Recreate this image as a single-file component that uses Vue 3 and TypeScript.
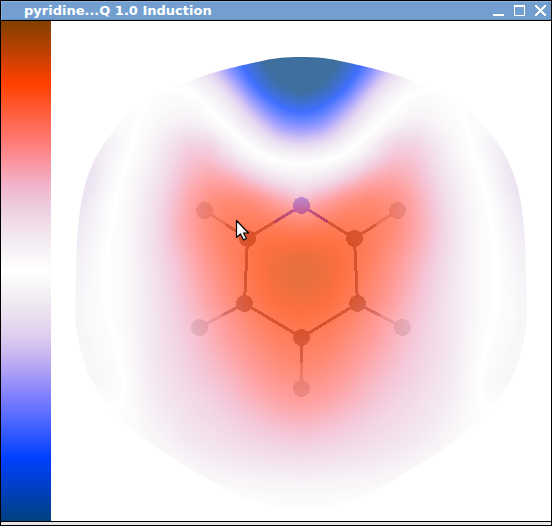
<script setup lang="ts">
import { onMounted, ref } from 'vue'

type Rgb = [number, number, number]
type Pair = [number, number]

interface Atom {
  id: string
  kind: 'n' | 'c' | 'h'
  x: number
  y: number
}

const SIZE = 500
const CENTER = 250

// Colour scale: level (percent) to colour, most positive first.
const scale: { level: number; rgb: Rgb }[] = [
  { level: 100, rgb: [128, 64, 0] },
  { level: 75, rgb: [255, 64, 0] },
  { level: 50, rgb: [255, 128, 128] },
  { level: 34, rgb: [242, 180, 204] },
  { level: 25, rgb: [238, 207, 224] },
  { level: 12, rgb: [243, 236, 242] },
  { level: 0, rgb: [255, 255, 255] },
  { level: -12, rgb: [240, 235, 242] },
  { level: -25, rgb: [224, 208, 238] },
  { level: -34, rgb: [200, 180, 240] },
  { level: -50, rgb: [128, 128, 255] },
  { level: -75, rgb: [0, 64, 255] },
  { level: -100, rgb: [0, 64, 128] },
]

const scaleStyle = {
  background: `linear-gradient(to bottom, ${scale
    .map((s) => `rgb(${s.rgb.join(',')}) ${(100 - s.level) / 2}%`)
    .join(', ')})`,
}

const upper = [0, 18, 31, 44, 58, 71, 91, 114, 131, 148]
const lower = [0, 24, 48, 70, 91, 108, 124, 141, 160]

const zip = (columns: number[], values: number[], extra: Pair[] = []): Pair[] => [
  ...values.map((v, i): Pair => [columns[i], v]),
  ...extra,
]

// Sampled potential: each row lists [distance from the axis, level].
const samples: { y: number; row: Pair[] }[] = [
  { y: 30, row: [[0, -110], [40, -108], [54, -88], [68, -70], [86, -46], [102, -20], [124, -4]] },
  { y: 49, row: [[0, -112], [28, -102], [41, -92], [58, -74], [68, -61], [78, -45], [88, -31], [98, -20], [110, -9], [130, -2]] },
  { y: 59, row: [[0, -110], [24, -101], [44, -82], [54, -70], [64, -55], [74, -39], [84, -26], [94, -18], [108, -8], [124, -2], [160, 0]] },
  { y: 69, row: [[0, -104], [12, -100], [31, -88], [41, -77], [51, -64], [61, -46], [71, -31], [84, -17], [98, -7], [114, 0], [160, 0]] },
  { y: 79, row: [[0, -91], [18, -84], [31, -73], [41, -63], [51, -49], [61, -33], [71, -20], [81, -11], [94, -2], [106, 3], [124, 5], [158, 0], [180, -3]] },
  { y: 89, row: zip(upper, [-78, -73, -62, -45, -27, -12, 0, 8, 6, 2], [[156, 0], [185, -4]]) },
  { y: 99, row: zip(upper, [-65, -60, -48, -32, -17, -7, 5, 12, 9, 4], [[161, 0], [181, -5]]) },
  { y: 109, row: zip(upper, [-50, -46, -35, -21, -10, 0, 15, 20, 14, 7], [[164, 1], [188, -7]]) },
  { y: 119, row: zip(upper, [-34, -29, -21, -11, -1, 9, 25, 27, 18, 9], [[166, 1], [191, -10]]) },
  { y: 129, row: zip(upper, [-18, -14, -9, -2, 6, 17, 32, 32, 22, 11], [[170, 0], [197, -14]]) },
  { y: 139, row: zip(upper, [-3, -1, 2, 7, 15, 26, 38, 35, 24, 12], [[172, 1], [191, -7], [206, -18]]) },
  { y: 149, row: zip(upper, [6, 8, 12, 20, 30, 38, 44, 38, 27, 15], [[176, 1], [194, -8], [208, -20]]) },
  { y: 159, row: zip(lower, [15, 21, 35, 47, 49, 43, 34, 22, 11], [[180, 1], [198, -10], [212, -22]]) },
  { y: 169, row: zip(lower, [26, 35, 49, 55, 54, 47, 37, 24, 12], [[182, 1], [198, -8], [214, -21]]) },
  { y: 179, row: zip(lower, [38, 49, 59, 62, 58, 50, 39, 26, 13], [[176, 4], [186, 0], [198, -5], [215, -18], [222, -22]]) },
  { y: 199, row: zip(lower, [61, 65, 68, 67, 61, 52, 41, 28, 14], [[176, 5], [190, 0], [205, -8], [222, -17]]) },
  { y: 219, row: zip(lower, [74, 74, 72, 67, 60, 50, 40, 28, 15], [[178, 4], [194, 0], [210, -8], [224, -15]]) },
  { y: 239, row: zip(lower, [82, 79, 73, 66, 56, 46, 36, 26, 14], [[180, 4], [196, 0], [210, -6], [225, -12]]) },
  { y: 259, row: zip(lower, [82, 79, 72, 63, 53, 43, 34, 24, 13], [[180, 4], [196, 0], [210, -5], [226, -10]]) },
  { y: 279, row: zip(lower, [78, 76, 70, 60, 50, 40, 32, 23, 13], [[180, 4], [195, 0], [210, -4], [226, -9]]) },
  { y: 299, row: zip(lower, [73, 71, 64, 55, 45, 37, 30, 22, 13], [[178, 4], [191, 0], [210, -4], [225, -8]]) },
  { y: 319, row: zip(lower, [68, 66, 59, 51, 42, 35, 28, 22, 13], [[174, 4], [186, 0], [205, -5], [220, -8]]) },
  { y: 339, row: zip(lower, [64, 61, 54, 46, 38, 32, 26, 21, 12], [[179, 1], [195, -4], [212, -7]]) },
  { y: 359, row: zip(lower, [58, 55, 48, 40, 34, 29, 24, 19, 11], [[174, 1], [190, -5], [205, -7]]) },
  { y: 379, row: zip(lower, [51, 48, 42, 35, 29, 25, 21, 17, 9], [[171, 3], [185, -2]]) },
  { y: 399, row: zip(lower, [42, 39, 34, 29, 25, 22, 18, 13, 7], [[168, 2]]) },
  { y: 419, row: zip(lower, [32, 30, 27, 24, 20, 18, 14, 9, 4]) },
  { y: 439, row: zip(lower, [22, 21, 19, 17, 14, 11, 7, 4, 0]) },
  { y: 459, row: zip(lower, [11, 10, 9, 8, 6, 4, 1, 0, 0]) },
  { y: 479, row: zip(lower, [3, 3, 2, 1, 0, 0, 0, 0, 0]) },
  { y: 499, row: zip(lower, [0, 0, 0, 0, 0, 0, 0, 0, 0]) },
]

// Silhouette of the left half, from the top of the axis to the bottom.
const outline: Pair[] = [
  [250, 36], [228, 37], [206, 41], [176, 48], [152, 55], [126, 65], [102, 76], [82, 89],
  [66, 106], [52, 124], [42, 142], [34, 164], [29, 189], [26, 219], [25, 254], [24, 292],
  [26, 312], [32, 338], [42, 362], [59, 387], [82, 409], [109, 429], [146, 452], [176, 469],
  [206, 481], [230, 487], [250, 488],
]

const atoms: Atom[] = [
  { id: 'N1', kind: 'n', x: 250.5, y: 184.5 },
  { id: 'C2', kind: 'c', x: 196.5, y: 217.5 },
  { id: 'C3', kind: 'c', x: 193.5, y: 282.5 },
  { id: 'C4', kind: 'c', x: 250.5, y: 316.5 },
  { id: 'C5', kind: 'c', x: 306.5, y: 282.5 },
  { id: 'C6', kind: 'c', x: 303.5, y: 217.5 },
  { id: 'H2', kind: 'h', x: 153.5, y: 189.5 },
  { id: 'H3', kind: 'h', x: 148.5, y: 306.5 },
  { id: 'H4', kind: 'h', x: 250.5, y: 367.5 },
  { id: 'H5', kind: 'h', x: 351.5, y: 306.5 },
  { id: 'H6', kind: 'h', x: 346.5, y: 189.5 },
]

const bonds: [string, string][] = [
  ['N1', 'C2'], ['C2', 'C3'], ['C3', 'C4'], ['C4', 'C5'], ['C5', 'C6'], ['C6', 'N1'],
  ['C2', 'H2'], ['C3', 'H3'], ['C4', 'H4'], ['C5', 'H5'], ['C6', 'H6'],
]

const atomById = (id: string): Atom => atoms.find((a) => a.id === id)!

// Each bond is two halves, coloured after the nearer atom.
const halfBonds = bonds.flatMap(([from, to]) => {
  const a = atomById(from)
  const b = atomById(to)
  const mx = (a.x + b.x) / 2
  const my = (a.y + b.y) / 2
  return [
    { key: from + to, kind: a.kind, x1: a.x, y1: a.y, x2: mx, y2: my },
    { key: to + from, kind: b.kind, x1: b.x, y1: b.y, x2: mx, y2: my },
  ]
})

function colourAt(level: number): Rgb {
  const v = Math.max(-100, Math.min(100, level))
  let i = 0
  while (i < scale.length - 2 && scale[i + 1].level > v) i++
  const a = scale[i]
  const b = scale[i + 1]
  const t = (a.level - v) / (a.level - b.level)
  return [0, 1, 2].map((k) => a.rgb[k] + (b.rgb[k] - a.rgb[k]) * t) as Rgb
}

function alongRow(row: Pair[], d: number): number {
  for (let i = 1; i < row.length; i++) {
    if (d <= row[i][0]) {
      const [x0, v0] = row[i - 1]
      const [x1, v1] = row[i]
      return v0 + ((v1 - v0) * (d - x0)) / (x1 - x0)
    }
  }
  return row[row.length - 1][1]
}

function buildField(): Float32Array {
  const field = new Float32Array(SIZE * SIZE)
  const rows = samples.map((s) => Array.from({ length: CENTER + 1 }, (_, d) => alongRow(s.row, d)))
  let i = 0
  for (let y = 0; y < SIZE; y++) {
    while (i < samples.length - 2 && y > samples[i + 1].y) i++
    const y0 = samples[i].y
    const y1 = samples[i + 1].y
    const t = Math.max(0, Math.min(1, (y - y0) / (y1 - y0)))
    for (let x = 0; x < SIZE; x++) {
      const d = Math.abs(x - CENTER)
      field[y * SIZE + x] = rows[i][d] * (1 - t) + rows[i + 1][d] * t
    }
  }
  return field
}

function smooth(src: Float32Array, radius: number, step: number, other: number): Float32Array {
  const out = new Float32Array(src.length)
  for (let line = 0; line < SIZE; line++) {
    for (let p = 0; p < SIZE; p++) {
      let sum = 0
      for (let k = -radius; k <= radius; k++) {
        const q = Math.max(0, Math.min(SIZE - 1, p + k))
        sum += src[line * other + q * step]
      }
      out[line * other + p * step] = sum / (radius * 2 + 1)
    }
  }
  return out
}

function surfacePath(): Path2D {
  const right = outline.slice(1, -1).reverse().map(([x, y]): Pair => [2 * CENTER - x, y])
  const pts = [...outline, ...right]
  const n = pts.length
  const path = new Path2D()
  path.moveTo(pts[0][0], pts[0][1])
  for (let i = 0; i < n; i++) {
    const p0 = pts[(i + n - 1) % n]
    const p1 = pts[i]
    const p2 = pts[(i + 1) % n]
    const p3 = pts[(i + 2) % n]
    path.bezierCurveTo(
      p1[0] + (p2[0] - p0[0]) / 6, p1[1] + (p2[1] - p0[1]) / 6,
      p2[0] - (p3[0] - p1[0]) / 6, p2[1] - (p3[1] - p1[1]) / 6,
      p2[0], p2[1],
    )
  }
  path.closePath()
  return path
}

const surface = ref<HTMLCanvasElement | null>(null)

onMounted(() => {
  const ctx = surface.value?.getContext('2d')
  if (!ctx) return
  let field = buildField()
  for (let pass = 0; pass < 2; pass++) {
    field = smooth(field, 5, 1, SIZE)
    field = smooth(field, 5, SIZE, 1)
  }
  const image = ctx.createImageData(SIZE, SIZE)
  field.forEach((level, i) => {
    const [r, g, b] = colourAt(level)
    image.data.set([r, g, b, 255], i * 4)
  })
  ctx.putImageData(image, 0, 0)
  ctx.globalCompositeOperation = 'destination-in'
  ctx.fill(surfacePath())
})
</script>

<template>
  <main class="window">
    <header class="titlebar">
      <h1 class="title">pyridine...Q 1.0 Induction</h1>
      <div class="controls">
        <button type="button" class="control" aria-label="Minimize">
          <svg viewBox="0 0 11 11"><path d="M0 9h11v2H0z" /></svg>
        </button>
        <button type="button" class="control" aria-label="Maximize">
          <svg viewBox="0 0 11 11"><path fill-rule="evenodd" d="M0 0h11v11H0zM1 2v8h9V2z" /></svg>
        </button>
        <button type="button" class="control" aria-label="Close">
          <svg viewBox="0 0 11 11">
            <path d="M0 0h2v1h1v1h1v1h1v1h1V3h1V2h1V1h1V0h2v2h-1v1H9v1H8v1H7v1h1v1h1v1h1v1h1v2H9v-1H8V9H7V8H6V7H5v1H4v1H3v1H2v1H0V9h1V8h1V7h1V6h1V5H3V4H2V3H1V2H0z" />
          </svg>
        </button>
      </div>
    </header>
    <section class="viewer">
      <div class="scale" :style="scaleStyle"></div>
      <div class="plot">
        <svg class="layer" viewBox="0 0 500 500">
          <line
            v-for="b in halfBonds"
            :key="b.key"
            :class="['bond', b.kind]"
            :x1="b.x1"
            :y1="b.y1"
            :x2="b.x2"
            :y2="b.y2"
          />
          <circle v-for="a in atoms" :key="a.id" :class="['atom', a.kind]" :cx="a.x" :cy="a.y" r="8.5" />
        </svg>
        <canvas ref="surface" class="layer surface" width="500" height="500"></canvas>
        <svg class="layer front" viewBox="0 0 500 500">
          <defs>
            <linearGradient id="pointer-fill" x1="0" y1="0" x2="1" y2="1">
              <stop offset="0.3" stop-color="#fff" />
              <stop offset="1" stop-color="#ddd" />
            </linearGradient>
          </defs>
          <path class="pointer" d="M185.500 199.500v17l4-3.500 3 6 3-1.500-3-5.500h5z" />
        </svg>
      </div>
    </section>
    <footer class="grip"></footer>
  </main>
</template>

<style>
body {
  margin: 0;
  background: #fff;
}
</style>

<style scoped>
.window {
  border: 1px solid #000;
  background: #fff;
}

.titlebar {
  display: flex;
  align-items: center;
  justify-content: space-between;
  box-sizing: border-box;
  height: 20px;
  padding: 0 5px 0 23px;
  background: #729fcf;
  border-bottom: 1px solid #000;
  box-shadow: inset 1px 1px #8fb3d9, inset 0 -1px #658fbd;
}

.title {
  margin: 0;
  font: bold 13px/18px "DejaVu Sans", sans-serif;
  color: #fff;
  white-space: nowrap;
}

.controls {
  display: flex;
  gap: 10px;
}

.control {
  display: block;
  width: 11px;
  height: 11px;
  padding: 0;
  border: 0;
  background: none;
}

.control svg {
  display: block;
  width: 11px;
  height: 11px;
  fill: #fff;
  shape-rendering: crispEdges;
}

.viewer {
  display: flex;
}

.scale {
  flex: 0 0 50px;
}

.plot {
  flex: 1;
  display: grid;
  min-width: 0;
}

.layer {
  grid-area: 1 / 1;
  display: block;
  width: 100%;
  aspect-ratio: 1;
}

.surface {
  opacity: 0.75;
}

.front {
  z-index: 1;
}

.bond {
  stroke-width: 3;
  shape-rendering: crispEdges;
}

.atom {
  shape-rendering: crispEdges;
}

.bond.c {
  stroke: #686868;
}

.bond.h {
  stroke: #b4b4b4;
}

.bond.n {
  stroke: #0000d0;
}

.atom.c {
  fill: #686868;
}

.atom.h {
  fill: #b4b4b4;
}

.atom.n {
  fill: #1020f8;
}

.pointer {
  fill: url(#pointer-fill);
  stroke: #000;
  stroke-width: 1.2;
  stroke-linejoin: round;
}

.grip {
  height: 3px;
  border-top: 1px solid #000;
  background: #e6e6e6;
}
</style>
